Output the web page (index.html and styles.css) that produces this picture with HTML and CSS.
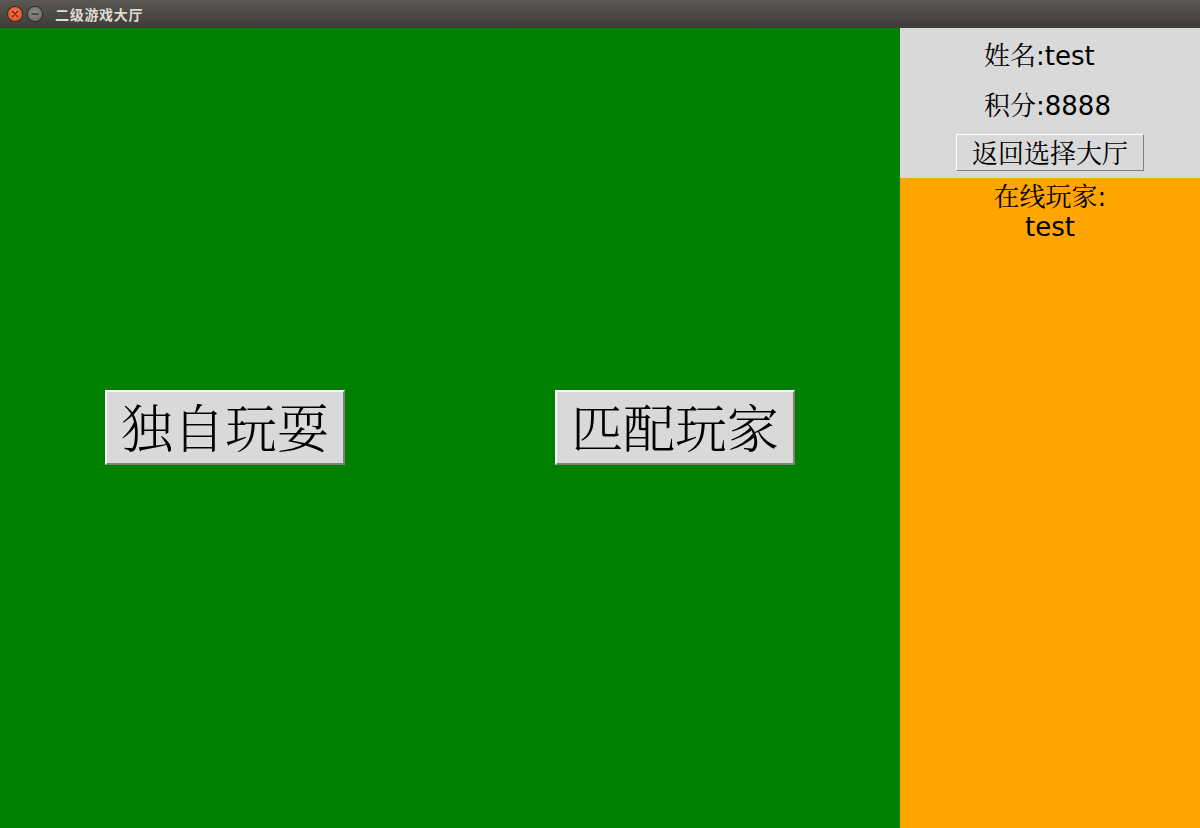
FILE: index.html
```html
<!DOCTYPE html>
<html lang="zh">
<head>
<meta charset="utf-8">
<title>二级游戏大厅</title>
<link rel="stylesheet" href="styles.css">
</head>
<body>
<div class="window">
  <div class="titlebar">
    <div class="controls">
      <span class="ctl close"><svg width="14" height="14" viewBox="0 0 14 14"><path d="M4.5 4.5 L9.5 9.5 M9.5 4.5 L4.5 9.5" stroke="#7a1e0c" stroke-width="1.4" stroke-linecap="round"/></svg></span>
      <span class="ctl min"><svg width="14" height="14" viewBox="0 0 14 14"><path d="M4 7 H10" stroke="#3a3a38" stroke-width="1.4" stroke-linecap="round"/></svg></span>
    </div>
    <span class="title">二级游戏大厅</span>
  </div>
  <div class="main">
    <div class="stage">
      <button class="big-btn">独自玩耍</button>
      <button class="big-btn">匹配玩家</button>
    </div>
    <div class="side">
      <div class="info">
        <div class="line">姓名:test</div>
        <div class="line score">积分:8888</div>
        <button class="back-btn">返回选择大厅</button>
      </div>
      <div class="online">
        <div class="online-title">在线玩家:</div>
        <div class="player">test</div>
      </div>
    </div>
  </div>
</div>
</body>
</html>
```

FILE: styles.css
```css
html, body {
  margin: 0;
  padding: 0;
  width: 1200px;
  height: 828px;
  overflow: hidden;
}
.window {
  display: flex;
  flex-direction: column;
  width: 1200px;
  height: 828px;
  font-family: "DejaVu Sans", "Noto Serif CJK SC", "Noto Sans CJK SC", sans-serif;
}
.titlebar {
  height: 28px;
  flex: none;
  display: flex;
  align-items: center;
  background: linear-gradient(#5a5853, #3d3c38);
  color: #dfdbd2;
}
.controls {
  display: flex;
  gap: 6px;
  padding-left: 8px;
}
.ctl {
  width: 14px;
  height: 14px;
  border-radius: 50%;
  display: block;
}
.ctl svg { display: block; }
.close {
  background: radial-gradient(circle at 50% 40%, #f77a52, #d9471f);
  box-shadow: 0 0 0 1px #3a2a20;
}
.min {
  background: radial-gradient(circle at 50% 40%, #8d8b85, #6b6964);
  box-shadow: 0 0 0 1px #2e2d2a;
}
.title {
  margin-left: 13px;
  font-size: 14px;
  font-weight: bold;
  font-family: "Noto Sans CJK SC", sans-serif;
  letter-spacing: 0.7px;
}
.main {
  flex: 1;
  display: flex;
}
.stage {
  width: 900px;
  background: #008000;
  display: flex;
  align-items: center;
  padding-left: 105px;
  gap: 210px;
  box-sizing: border-box;
}
.big-btn {
  width: 240px;
  height: 75px;
  margin-top: -1px;
  background: #d9d9d9;
  border: 2px solid;
  border-color: #ffffff #808080 #808080 #ffffff;
  font-family: "Noto Serif CJK SC", "Noto Sans CJK SC", serif;
  font-size: 52px;
  font-weight: 300;
  color: #000;
  padding: 0 0 4px 0;
  line-height: 1;
  box-sizing: border-box;
}
.side {
  width: 300px;
  display: flex;
  flex-direction: column;
}
.info {
  height: 150px;
  background: #d9d9d9;
  display: flex;
  flex-direction: column;
  align-items: flex-start;
  box-sizing: border-box;
  padding-top: 12px;
  padding-left: 84px;
}
.line {
  font-size: 26px;
  line-height: 32px;
  color: #000;
}
.score {
  margin-top: 18px;
}
.back-btn {
  margin-top: 12px;
  margin-left: -28px;
  width: 188px;
  height: 37px;
  background: #d9d9d9;
  border: 1px solid;
  border-color: #ffffff #808080 #808080 #ffffff;
  font-family: "Noto Serif CJK SC", "Noto Sans CJK SC", serif;
  font-size: 26px;
  line-height: 1;
  padding: 0 0 2px 0;
  color: #000;
}
.online {
  flex: 1;
  background: #ffa500;
  display: flex;
  flex-direction: column;
  align-items: center;
  padding-top: 4px;
}
.online-title {
  font-size: 26px;
  line-height: 30px;
}
.player {
  font-size: 26px;
  line-height: 30px;
}
```
